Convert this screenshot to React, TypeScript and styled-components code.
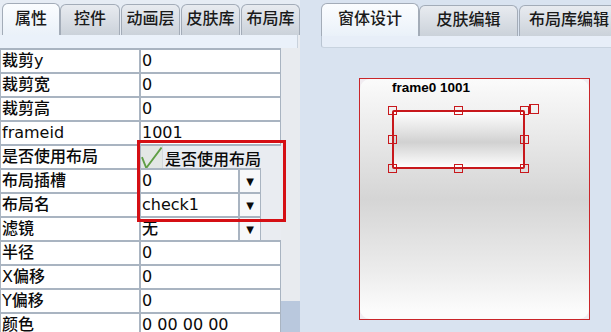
import * as React from 'react';
import styled, { createGlobalStyle } from 'styled-components';

const GlobalStyle = createGlobalStyle`
    html, body {
        margin: 0;
        padding: 0;
        overflow: hidden;
        background: #d9e3f0;
    }
`;

const FONT = '"DejaVu Sans", "Noto Sans CJK SC", sans-serif';
const CJK = '"Noto Sans CJK SC", "DejaVu Sans", sans-serif';

const Root = styled.div`
    display: flex;
    width: 611px;
    height: 332px;
    overflow: hidden;
    background: #d9e3f0;
    font-family: ${FONT};
    font-weight: 500;
    color: #0a0a0a;
`;

/* ---------- left panel ---------- */

const LeftPanel = styled.div`
    width: 300px;
    flex-shrink: 0;
    display: flex;
    flex-direction: column;
    background: #e9ecf1;
`;

const LeftTabBar = styled.div`
    height: 35px;
    display: flex;
    align-items: flex-end;
    padding-left: 2px;
    background: #e6ecf4;
`;

const Tab = styled.div<{ $active?: boolean; $w: number; $h: number }>`
    width: ${(p) => p.$w}px;
    height: ${(p) => p.$h}px;
    box-sizing: border-box;
    flex-shrink: 0;
    border: 1px solid #a3acb8;
    border-bottom: none;
    border-radius: 6px 6px 0 0;
    margin-right: ${(p) => (p.$active ? 0 : 1)}px;
    background: ${(p) => (p.$active
        ? 'linear-gradient(#fbfdff, #eaf1f9)'
        : 'linear-gradient(#e8ebf0, #cbd2da)')};
    font-family: ${CJK};
    font-size: 16px;
    line-height: ${(p) => p.$h - 6}px;
    text-align: center;
    white-space: nowrap;
    color: #1a1a1a;
`;

const LeftStrip = styled.div`
    height: 13px;
    width: 298px;
    box-sizing: border-box;
    background: #eaf1fa;
    border-right: 1px solid #c9d2dc;
`;

const GridArea = styled.div`
    flex: 1;
    display: flex;
    min-height: 0;
`;

const Grid = styled.div`
    width: 281px;
    display: flex;
    flex-direction: column;
`;

const Row = styled.div<{ $short?: boolean }>`
    display: flex;
    width: ${(p) => (p.$short ? 261 : 281)}px;
    height: 24px;
    flex-shrink: 0;
    box-sizing: border-box;
    border-top: 2px solid #a9b4c1;
`;

const Label = styled.div`
    width: 141px;
    box-sizing: border-box;
    padding-left: 1px;
    background: #fff;
    border-left: 1px solid #a9b4c1;
    border-right: 2px solid #a9b4c1;
    font-size: 16px;
    line-height: 22px;
    white-space: nowrap;
    overflow: hidden;
`;

const Value = styled.div<{ $plain?: boolean }>`
    flex: 1;
    display: flex;
    align-items: center;
    box-sizing: border-box;
    background: ${(p) => (p.$plain ? '#e9ecf1' : '#fff')};
    border-right: ${(p) => (p.$plain ? 'none' : '1px solid #a9b4c1')};
    font-size: 16px;
    line-height: 22px;
    white-space: nowrap;
`;

const Field = styled.div`
    flex: 1;
    height: 100%;
    padding-left: 1px;
    overflow: hidden;
`;

const DropButton = styled.div`
    width: 22px;
    height: 100%;
    box-sizing: border-box;
    border-left: 2px solid #a9b4c1;
    background: #f7f8fa;
    font-size: 10px;
    line-height: 24px;
    text-align: center;
`;

const CheckBox = styled.div`
    width: 22px;
    height: 24px;
    margin-top: 2px;
    display: flex;
    align-items: center;
    justify-content: center;
    box-sizing: border-box;
    border-right: 1px solid #d2d7dc;
    background: #e3e7e5;
`;

const CheckText = styled.span`
    padding-left: 2px;
    font-family: ${CJK};
    font-size: 16px;
    margin-top: 2px;
`;

const Highlight = styled.div`
    position: absolute;
    left: 137px;
    top: 140px;
    width: 149px;
    height: 82px;
    box-sizing: border-box;
    border: 3px solid #d50f14;
    pointer-events: none;
`;

const SideColumn = styled.div`
    flex: 1;
    display: flex;
    flex-direction: column;
`;

const SideFill = styled.div`
    flex: 1;
    background: #e8ebef;
`;

const SideThumb = styled.div`
    height: 31px;
    background: #b9c8dd;
`;

/* ---------- right panel ---------- */

const RightPanel = styled.div`
    flex: 1;
    display: flex;
    flex-direction: column;
    padding-left: 21px;
    min-width: 0;
`;

const RightTabBar = styled.div`
    height: 36px;
    display: flex;
    align-items: flex-end;
    overflow: hidden;
`;

const RightStrip = styled.div`
    height: 12px;
    box-sizing: border-box;
    background: #e7eef8;
    border-left: 1px solid #b9c4d1;
    border-bottom: 1px solid #c8d3df;
    border-bottom-left-radius: 3px;
`;

const Canvas = styled.div`
    flex: 1;
    padding: 30px 0 0 38px;
`;

const Form = styled.div`
    width: 231px;
    height: 242px;
    box-sizing: border-box;
    border: 1px solid #c9262a;
    background: #f1ecf1;
`;

const Surface = styled.div`
    position: relative;
    width: 100%;
    height: 100%;
    border-radius: 10px;
    background: linear-gradient(#fbfbfb 0%, #e8e8e8 25%, #d5d5d5 50%, #ececec 80%, #fcfcfc 97%);
`;

const FormTitle = styled.div`
    position: absolute;
    left: 32px;
    top: 1px;
    font-family: "Liberation Sans", Arial, sans-serif;
    font-weight: bold;
    font-size: 13.5px;
    color: #000;
`;

const Control = styled.div`
    position: absolute;
    left: 32px;
    top: 31px;
    width: 133px;
    height: 59px;
    box-sizing: border-box;
    border: 2px solid #c8181c;
    border-radius: 2px;
    background: linear-gradient(#fefefe 0%, #e2e2e2 35%, #d1d1d1 55%, #f4f4f4 90%, #fff 100%);
`;

const Handle = styled.div<{ $x: string; $y: string; $size?: number; $thick?: boolean }>`
    position: absolute;
    left: ${(p) => p.$x};
    top: ${(p) => p.$y};
    width: ${(p) => p.$size ?? 9}px;
    height: ${(p) => p.$size ?? 9}px;
    box-sizing: border-box;
    border: 1px solid #c8181c;
    border-left-width: ${(p) => (p.$thick ? 2 : 1)}px;
`;

type Prop = { label: string; value?: string; kind?: 'text' | 'drop' | 'check' };

const props: Prop[] = [
    { label: '裁剪y', value: '0' },
    { label: '裁剪宽', value: '0' },
    { label: '裁剪高', value: '0' },
    { label: 'frameid', value: '1001' },
    { label: '是否使用布局', kind: 'check' },
    { label: '布局插槽', value: '0', kind: 'drop' },
    { label: '布局名', value: 'check1', kind: 'drop' },
    { label: '滤镜', value: '无', kind: 'drop' },
    { label: '半径', value: '0' },
    { label: 'X偏移', value: '0' },
    { label: 'Y偏移', value: '0' },
    { label: '颜色', value: '0 00 00 00' },
];

function CheckMark(): JSX.Element {
    return (
        <svg width="22" height="24" viewBox="0 0 22 24">
            <path d="M1 11 L5.5 22.5 L21.5 1" fill="none" stroke="#5f9e45" strokeWidth="2" strokeLinejoin="round" />
        </svg>
    );
}

function PropRow({ p }: { p: Prop }): JSX.Element {
    if (p.kind === 'check') {
        return (
            <Row>
                <Label>{p.label}</Label>
                <Value $plain>
                    <CheckBox><CheckMark /></CheckBox>
                    <CheckText>是否使用布局</CheckText>
                </Value>
            </Row>
        );
    }
    if (p.kind === 'drop') {
        return (
            <Row $short>
                <Label>{p.label}</Label>
                <Value>
                    <Field>{p.value}</Field>
                    <DropButton>▼</DropButton>
                </Value>
            </Row>
        );
    }
    return (
        <Row>
            <Label>{p.label}</Label>
            <Value><Field>{p.value}</Field></Value>
        </Row>
    );
}

const LeftWrap = styled.div`
    position: relative;
    display: flex;
`;

export default function App(): JSX.Element {
    return (
        <Root>
            <GlobalStyle />
            <LeftWrap>
                <LeftPanel>
                    <LeftTabBar>
                        <Tab $active $w={58} $h={32}>属性</Tab>
                        <Tab $w={60} $h={31}>控件</Tab>
                        <Tab $w={59} $h={31}>动画层</Tab>
                        <Tab $w={59} $h={31}>皮肤库</Tab>
                        <Tab $w={59} $h={31}>布局库</Tab>
                    </LeftTabBar>
                    <LeftStrip />
                    <GridArea>
                        <Grid>
                            {props.map((p) => <PropRow key={p.label} p={p} />)}
                        </Grid>
                        <SideColumn>
                            <SideFill />
                            <SideThumb />
                        </SideColumn>
                    </GridArea>
                </LeftPanel>
                <Highlight />
            </LeftWrap>
            <RightPanel>
                <RightTabBar>
                    <Tab $active $w={98} $h={33}>窗体设计</Tab>
                    <Tab $w={99} $h={31}>皮肤编辑</Tab>
                    <Tab $w={100} $h={31}>布局库编辑</Tab>
                </RightTabBar>
                <RightStrip />
                <Canvas>
                    <Form>
                        <Surface>
                            <FormTitle>frame0 1001</FormTitle>
                            <Control>
                                <Handle $x="-6px" $y="-6px" />
                                <Handle $x="calc(50% - 4.5px)" $y="-6px" />
                                <Handle $x="calc(100% - 3px)" $y="-6px" />
                                <Handle $x="-6px" $y="calc(50% - 4.5px)" />
                                <Handle $x="calc(100% - 3px)" $y="calc(50% - 4.5px)" />
                                <Handle $x="-6px" $y="calc(100% - 3px)" />
                                <Handle $x="calc(50% - 4.5px)" $y="calc(100% - 3px)" />
                                <Handle $x="calc(100% - 3px)" $y="calc(100% - 3px)" />
                                <Handle $x="135px" $y="-8px" $size={10} $thick />
                            </Control>
                        </Surface>
                    </Form>
                </Canvas>
            </RightPanel>
        </Root>
    );
}
